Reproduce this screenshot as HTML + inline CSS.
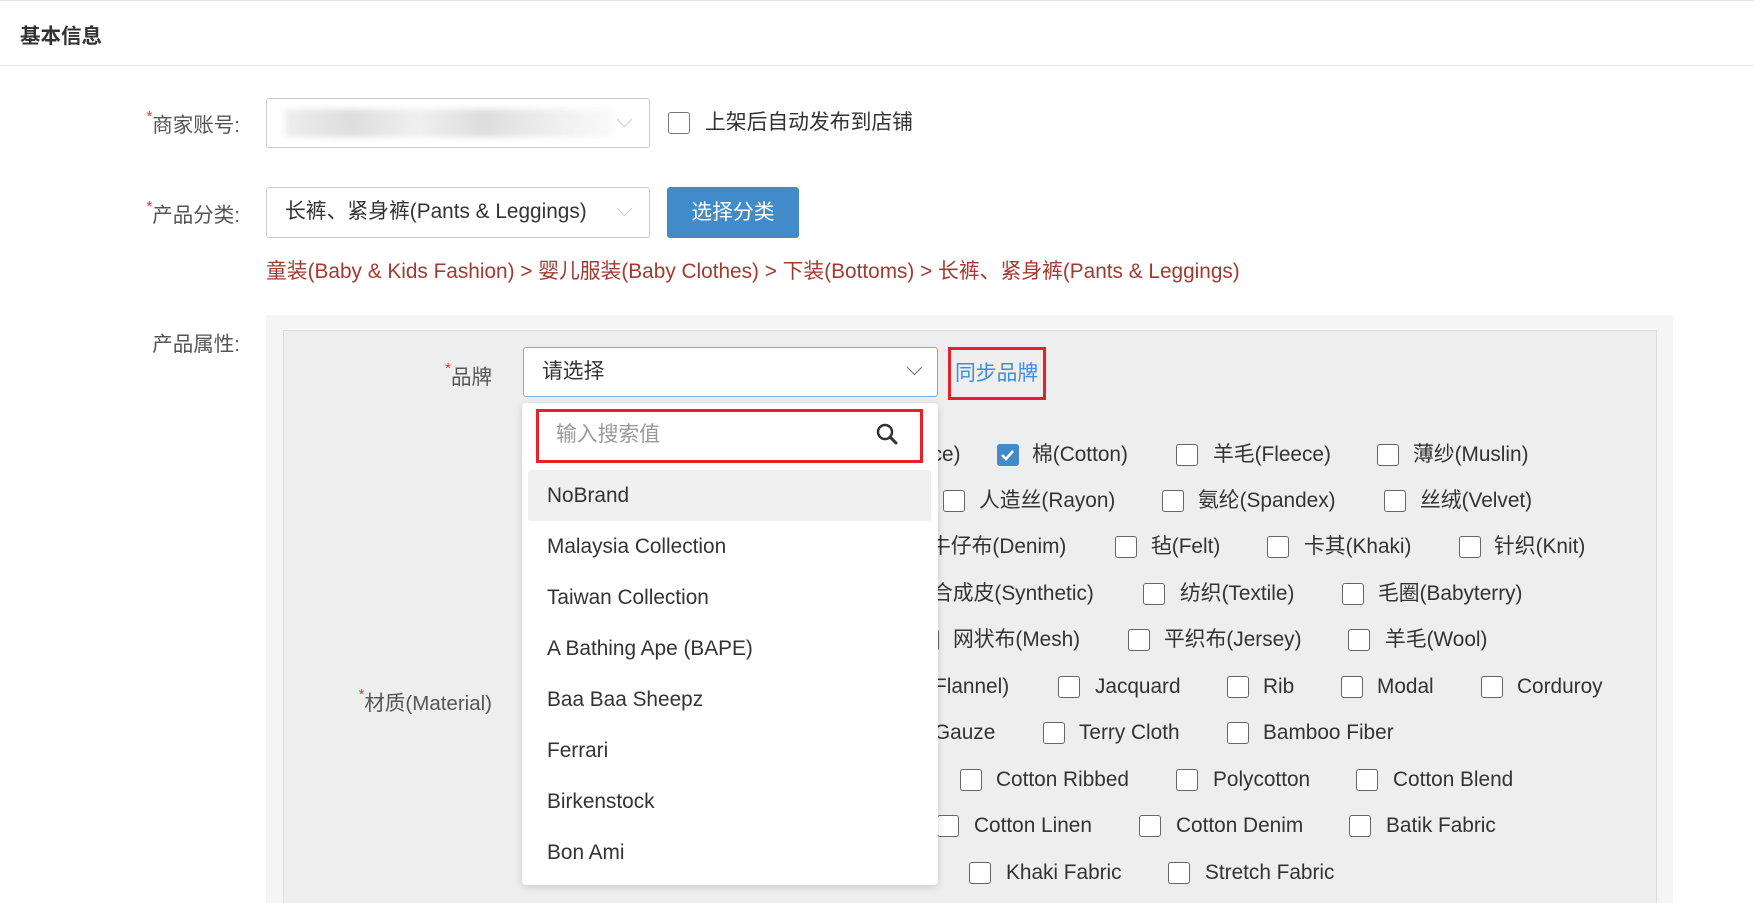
<!DOCTYPE html>
<html><head><meta charset="utf-8"><style>
*{box-sizing:border-box;margin:0;padding:0}
html,body{width:1754px;height:903px;overflow:hidden}
body{background:#fff;font-family:"Liberation Sans","Noto Sans CJK SC",sans-serif;color:#333;position:relative}
.a{position:absolute;white-space:nowrap}
.lbl{font-size:20.5px;color:#555;text-align:right}
.req{color:#e33;font-size:15px;vertical-align:top}
.sel{position:absolute;background:#fff;border:1px solid #ccc;border-radius:3px}
.cb{position:absolute;width:22px;height:22px;border:1.5px solid #666;border-radius:3px;background:#fff}
.t{position:absolute;font-size:20.8px;color:#333;white-space:nowrap;line-height:24px}
.chev{position:absolute;width:11px;height:11px;border-right:1.5px solid #999;border-bottom:1.5px solid #999;transform:rotate(45deg)}
.item{position:absolute;left:547px;font-size:20.8px;color:#333;line-height:24px}
</style></head><body>
<div class="a" style="left:0;top:0;width:1754px;height:1px;background:#e6e6e6"></div>
<div class="a" style="left:20px;top:19px;font-size:20.5px;font-weight:bold;color:#333">基本信息</div>
<div class="a" style="left:0;top:65px;width:1754px;height:1px;background:#e4e4e4"></div>

<div class="a lbl" style="left:100px;width:140px;top:108px"><span class="req">*</span>商家账号:</div>
<div class="sel" style="left:266px;top:98px;width:384px;height:50px">
 <div style="position:absolute;left:18px;top:10px;width:330px;height:28px;background:linear-gradient(90deg,#eee,#ddd 20%,#f0f0f0 40%,#ddd 60%,#eee 80%,#fafafa);filter:blur(3px)"></div>
 <div class="chev" style="left:352px;top:15px;border-color:#ccc"></div>
</div>
<div class="cb" style="left:668px;top:112px;border-color:#777"></div>
<div class="t" style="left:705px;top:111px">上架后自动发布到店铺</div>

<div class="a lbl" style="left:100px;width:140px;top:198px"><span class="req">*</span>产品分类:</div>
<div class="sel" style="left:266px;top:187px;width:384px;height:51px">
 <div class="t" style="left:18px;top:12px">长裤、紧身裤(Pants &amp; Leggings)</div>
 <div class="chev" style="left:352px;top:15px;border-color:#ccc"></div>
</div>
<div class="a" style="left:667px;top:187px;width:132px;height:51px;background:#428bca;border-radius:3px;color:#fff;font-size:20.8px;text-align:center;line-height:51px">选择分类</div>
<div class="t" style="left:266px;top:260px;color:#a33a32">童装(Baby &amp; Kids Fashion) &gt; 婴儿服装(Baby Clothes) &gt; 下装(Bottoms) &gt; 长裤、紧身裤(Pants &amp; Leggings)</div>

<div class="a lbl" style="left:100px;width:140px;top:327px">产品属性:</div>
<div class="a" style="left:266px;top:315px;width:1407px;height:588px;background:#f5f5f5"></div>
<div class="a" style="left:283px;top:330px;width:1374px;height:580px;background:#eee;border:1px solid #ddd"></div>

<div class="a lbl" style="left:380px;width:112px;top:360px"><span class="req">*</span>品牌</div>
<div class="sel" style="left:523px;top:347px;width:415px;height:50px;border-color:#7aaee0">
 <div class="t" style="left:18px;top:12px">请选择</div>
 <div class="chev" style="left:385px;top:14px;border-color:#666"></div>
</div>
<div class="a" style="left:948px;top:347px;width:98px;height:53px;border:3px solid #e8202a"></div>
<div class="t" style="left:955px;top:362px;color:#3a8ee6">同步品牌</div>

<div class="a lbl" style="left:300px;width:192px;top:686px"><span class="req">*</span>材质(Material)</div>

<div class="t" style="left:860px;top:443px">蕾丝(Lace)</div>
<div class="cb" style="left:997px;top:444px;background:#428bca;border-color:#428bca"><svg width="19" height="19" viewBox="0 0 19 19" style="position:absolute;left:0;top:0"><path d="M4 10 L8 14 L15 6" stroke="#fff" stroke-width="2.5" fill="none"/></svg></div>
<div class="t" style="left:1032px;top:443px">棉(Cotton)</div>
<div class="cb" style="left:1176px;top:444px"></div><div class="t" style="left:1213px;top:443px">羊毛(Fleece)</div>
<div class="cb" style="left:1377px;top:444px"></div><div class="t" style="left:1413px;top:443px">薄纱(Muslin)</div>
<div class="cb" style="left:943px;top:490px"></div><div class="t" style="left:979px;top:489px">人造丝(Rayon)</div>
<div class="cb" style="left:1162px;top:490px"></div><div class="t" style="left:1198px;top:489px">氨纶(Spandex)</div>
<div class="cb" style="left:1384px;top:490px"></div><div class="t" style="left:1420px;top:489px">丝绒(Velvet)</div>
<div class="t" style="left:930px;top:535px">牛仔布(Denim)</div>
<div class="cb" style="left:1115px;top:536px"></div><div class="t" style="left:1151px;top:535px">毡(Felt)</div>
<div class="cb" style="left:1267px;top:536px"></div><div class="t" style="left:1304px;top:535px">卡其(Khaki)</div>
<div class="cb" style="left:1459px;top:536px"></div><div class="t" style="left:1494px;top:535px">针织(Knit)</div>
<div class="t" style="left:932px;top:582px">合成皮(Synthetic)</div>
<div class="cb" style="left:1143px;top:583px"></div><div class="t" style="left:1180px;top:582px">纺织(Textile)</div>
<div class="cb" style="left:1342px;top:583px"></div><div class="t" style="left:1378px;top:582px">毛圈(Babyterry)</div>
<div class="cb" style="left:917px;top:629px"></div><div class="t" style="left:953px;top:628px">网状布(Mesh)</div>
<div class="cb" style="left:1128px;top:629px"></div><div class="t" style="left:1164px;top:628px">平织布(Jersey)</div>
<div class="cb" style="left:1348px;top:629px"></div><div class="t" style="left:1385px;top:628px">羊毛(Wool)</div>
<div class="t" style="left:934px;top:675px">Flannel)</div>
<div class="cb" style="left:1058px;top:676px"></div><div class="t" style="left:1095px;top:675px">Jacquard</div>
<div class="cb" style="left:1227px;top:676px"></div><div class="t" style="left:1263px;top:675px">Rib</div>
<div class="cb" style="left:1341px;top:676px"></div><div class="t" style="left:1377px;top:675px">Modal</div>
<div class="cb" style="left:1481px;top:676px"></div><div class="t" style="left:1517px;top:675px">Corduroy</div>
<div class="t" style="left:934px;top:721px">Gauze</div>
<div class="cb" style="left:1043px;top:722px"></div><div class="t" style="left:1079px;top:721px">Terry Cloth</div>
<div class="cb" style="left:1227px;top:722px"></div><div class="t" style="left:1263px;top:721px">Bamboo Fiber</div>
<div class="cb" style="left:960px;top:769px"></div><div class="t" style="left:996px;top:768px">Cotton Ribbed</div>
<div class="cb" style="left:1176px;top:769px"></div><div class="t" style="left:1213px;top:768px">Polycotton</div>
<div class="cb" style="left:1356px;top:769px"></div><div class="t" style="left:1393px;top:768px">Cotton Blend</div>
<div class="cb" style="left:937px;top:815px"></div><div class="t" style="left:974px;top:814px">Cotton Linen</div>
<div class="cb" style="left:1139px;top:815px"></div><div class="t" style="left:1176px;top:814px">Cotton Denim</div>
<div class="cb" style="left:1349px;top:815px"></div><div class="t" style="left:1386px;top:814px">Batik Fabric</div>
<div class="cb" style="left:969px;top:862px"></div><div class="t" style="left:1006px;top:861px">Khaki Fabric</div>
<div class="cb" style="left:1168px;top:862px"></div><div class="t" style="left:1205px;top:861px">Stretch Fabric</div>

<div class="a" style="left:522px;top:403px;width:416px;height:482px;background:#fff;border-radius:4px;box-shadow:0 2px 8px rgba(0,0,0,.15)"></div>
<div class="a" style="left:536px;top:409px;width:387px;height:54px;border:3px solid #e8202a;background:#fff"></div>
<div class="t" style="left:556px;top:423px;color:#999">输入搜索值</div>
<svg class="a" style="left:875px;top:422px" width="24" height="24" viewBox="0 0 24 24"><circle cx="10" cy="10" r="7" stroke="#333" stroke-width="2.5" fill="none"/><path d="M15 15 L21 21" stroke="#333" stroke-width="3" stroke-linecap="round"/></svg>
<div class="a" style="left:528px;top:470px;width:403px;height:51px;background:#f0f0f0;border-radius:3px"></div>
<div class="item" style="top:484px">NoBrand</div>
<div class="item" style="top:535px">Malaysia Collection</div>
<div class="item" style="top:586px">Taiwan Collection</div>
<div class="item" style="top:637px">A Bathing Ape (BAPE)</div>
<div class="item" style="top:688px">Baa Baa Sheepz</div>
<div class="item" style="top:739px">Ferrari</div>
<div class="item" style="top:790px">Birkenstock</div>
<div class="item" style="top:841px">Bon Ami</div>
</body></html>
